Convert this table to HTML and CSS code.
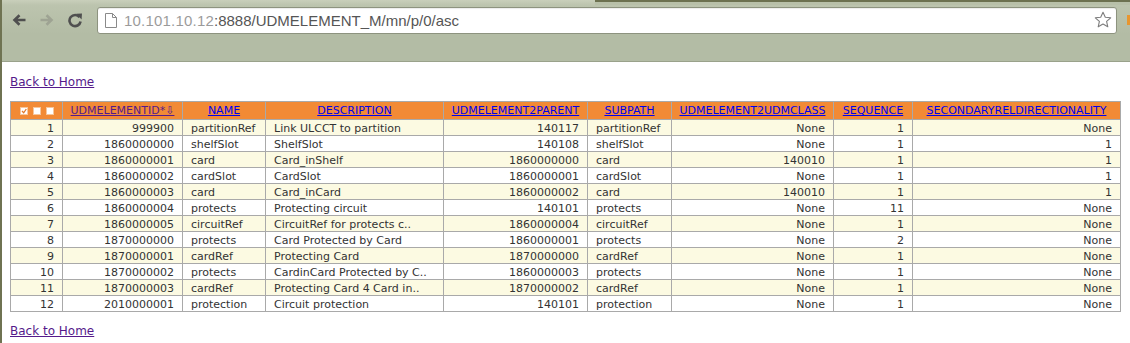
FILE: index.html
```html
<!DOCTYPE html>
<html>
<head>
<meta charset="utf-8">
<title>UDMELEMENT_M</title>
<link rel="stylesheet" href="styles.css">
</head>
<body>
<div class="window">
  <div class="chrome">
    <div class="tabstrip"><div class="tab-active"></div><div class="tab-rest"></div></div>
    <div class="toolbar">
      <div class="navbtn">
        <svg width="16" height="16" viewBox="0 0 16 16"><path d="M14.5 8H4M8.5 3.2L3.5 8l5 4.8" fill="none" stroke="#4f4f4f" stroke-width="2.6" stroke-linecap="butt" stroke-linejoin="miter"/></svg>
      </div>
      <div class="navbtn">
        <svg width="16" height="16" viewBox="0 0 16 16"><path d="M1.5 8H12M7.5 3.2l5 4.8-5 4.8" fill="none" stroke="#9ea393" stroke-width="2.6" stroke-linejoin="miter"/></svg>
      </div>
      <div class="navbtn">
        <svg width="16" height="16" viewBox="0 0 16 16"><path d="M12.6 5.2A5.6 5.6 0 1 0 13.6 9.6" fill="none" stroke="#4f4f4f" stroke-width="2.6"/><path d="M9.2 1.8L15 1.6 14.6 7.4Z" fill="#4f4f4f"/></svg>
      </div>
      <div class="omnibox">
        <svg class="pageicon" width="12" height="15" viewBox="0 0 12 15"><path d="M0.5 0.5H7.5L11.5 4.5V14.5H0.5Z" fill="#fff" stroke="#8a8a8a"/><path d="M7.5 0.5V4.5H11.5" fill="none" stroke="#8a8a8a"/></svg>
        <span class="url"><span class="host">10.101.10.12</span>:8888/UDMELEMENT_M/mn/p/0/asc</span>
        <svg class="star" width="18" height="18" viewBox="0 0 18 18"><path d="M9 1.2l2.3 5.1 5.4.5-4.1 3.6 1.2 5.4L9 13l-4.8 2.8 1.2-5.4L1.3 6.8l5.4-.5Z" fill="#fff" stroke="#7d7d7d" stroke-width="1.1" stroke-linejoin="round"/></svg>
      </div>
      <div class="ext"></div>
    </div>
    <div class="bookmarks"></div>
  </div>
  <div class="page">
    <p class="back"><a href="#home" class="visited">Back to Home</a></p>
    <table class="grid">
      <colgroup>
        <col class="c1"><col class="c2"><col class="c3"><col class="c4"><col class="c5"><col class="c6"><col class="c7"><col class="c8"><col class="c9">
      </colgroup>
      <thead>
        <tr>
          <th class="sel"><svg width="34" height="8" viewBox="0 0 34 8"><rect x="0.5" y="0.5" width="7" height="7" fill="#fff" stroke="#f6c69c"/><path d="M2 4l1.7 1.8L6.3 2" fill="none" stroke="#e27a2a" stroke-width="1.3"/><rect x="13.5" y="0.5" width="7" height="7" fill="#fff" stroke="#f6c69c"/><rect x="26.5" y="0.5" width="7" height="7" fill="#fff" stroke="#f6c69c"/></svg></th>
          <th><a href="#id" class="visited">UDMELEMENTID*⇩</a></th>
          <th><a href="#name">NAME</a></th>
          <th><a href="#desc">DESCRIPTION</a></th>
          <th><a href="#parent">UDMELEMENT2PARENT</a></th>
          <th><a href="#subpath">SUBPATH</a></th>
          <th><a href="#class">UDMELEMENT2UDMCLASS</a></th>
          <th><a href="#seq">SEQUENCE</a></th>
          <th><a href="#sec">SECONDARYRELDIRECTIONALITY</a></th>
        </tr>
      </thead>
      <tbody>
        <tr><td class="r">1</td><td class="r">999900</td><td>partitionRef</td><td>Link ULCCT to partition</td><td class="r">140117</td><td>partitionRef</td><td class="r">None</td><td class="r">1</td><td class="r">None</td></tr>
        <tr><td class="r">2</td><td class="r">1860000000</td><td>shelfSlot</td><td>ShelfSlot</td><td class="r">140108</td><td>shelfSlot</td><td class="r">None</td><td class="r">1</td><td class="r">1</td></tr>
        <tr><td class="r">3</td><td class="r">1860000001</td><td>card</td><td>Card_inShelf</td><td class="r">1860000000</td><td>card</td><td class="r">140010</td><td class="r">1</td><td class="r">1</td></tr>
        <tr><td class="r">4</td><td class="r">1860000002</td><td>cardSlot</td><td>CardSlot</td><td class="r">1860000001</td><td>cardSlot</td><td class="r">None</td><td class="r">1</td><td class="r">1</td></tr>
        <tr><td class="r">5</td><td class="r">1860000003</td><td>card</td><td>Card_inCard</td><td class="r">1860000002</td><td>card</td><td class="r">140010</td><td class="r">1</td><td class="r">1</td></tr>
        <tr><td class="r">6</td><td class="r">1860000004</td><td>protects</td><td>Protecting circuit</td><td class="r">140101</td><td>protects</td><td class="r">None</td><td class="r">11</td><td class="r">None</td></tr>
        <tr><td class="r">7</td><td class="r">1860000005</td><td>circuitRef</td><td>CircuitRef for protects c..</td><td class="r">1860000004</td><td>circuitRef</td><td class="r">None</td><td class="r">1</td><td class="r">None</td></tr>
        <tr><td class="r">8</td><td class="r">1870000000</td><td>protects</td><td>Card Protected by Card</td><td class="r">1860000001</td><td>protects</td><td class="r">None</td><td class="r">2</td><td class="r">None</td></tr>
        <tr><td class="r">9</td><td class="r">1870000001</td><td>cardRef</td><td>Protecting Card</td><td class="r">1870000000</td><td>cardRef</td><td class="r">None</td><td class="r">1</td><td class="r">None</td></tr>
        <tr><td class="r">10</td><td class="r">1870000002</td><td>protects</td><td>CardinCard Protected by C..</td><td class="r">1860000003</td><td>protects</td><td class="r">None</td><td class="r">1</td><td class="r">None</td></tr>
        <tr><td class="r">11</td><td class="r">1870000003</td><td>cardRef</td><td>Protecting Card 4 Card in..</td><td class="r">1870000002</td><td>cardRef</td><td class="r">None</td><td class="r">1</td><td class="r">None</td></tr>
        <tr><td class="r">12</td><td class="r">2010000001</td><td>protection</td><td>Circuit protection</td><td class="r">140101</td><td>protection</td><td class="r">None</td><td class="r">1</td><td class="r">None</td></tr>
      </tbody>
    </table>
    <p class="back"><a href="#home" class="visited">Back to Home</a></p>
  </div>
</div>
</body>
</html>
```
FILE: styles.css
```css
html, body {
  margin: 0;
  padding: 0;
  background: #ffffff;
  overflow: hidden;
}

.window {
  width: 1128px;
  height: 343px;
  border-left: 2px solid #6f7352;
  background: #ffffff;
}

.chrome {
  height: 62px;
  display: flex;
  flex-direction: column;
  background: #b3bca5;
}

.tabstrip {
  height: 5px;
  display: flex;
}

.tab-active {
  width: 593px;
  background: linear-gradient(#c9cfbb, #bcc4ae);
}

.tab-rest {
  flex: 1;
  border-top: 2px solid #6c7150;
  background: #b8c0a9;
}

.toolbar {
  height: 29px;
  display: flex;
  align-items: center;
  padding-left: 3px;
  background: linear-gradient(#bcc4ae, #b3bca5);
}

.navbtn {
  width: 28px;
  height: 27px;
  display: flex;
  align-items: center;
  justify-content: center;
}

.omnibox {
  margin-left: 8px;
  width: 1018px;
  height: 25px;
  margin-top: 1px;
  border: 1px solid #8d937f;
  border-radius: 3px;
  background: #ffffff;
  display: flex;
  align-items: center;
  box-shadow: inset 0 1px 1px rgba(0,0,0,0.08);
}

.pageicon {
  margin-left: 7px;
  margin-top: 1px;
}

.url {
  margin-left: 7px;
  font-family: "Liberation Sans", Arial, sans-serif;
  font-size: 15px;
  color: #555555;
  flex: 1;
  white-space: nowrap;
}

.host {
  color: #222;
  opacity: 0.45;
  letter-spacing: 0.2px;
}

.star {
  margin-right: 4px;
}

.ext {
  margin-left: 10px;
  width: 3px;
  height: 10px;
  background: #e8962f;
}

.bookmarks {
  flex: 1;
  border-bottom: 1px solid #9aa28b;
  background: #b3bca5;
}

.page {
  padding: 1px 8px;
  font-family: "DejaVu Sans", Verdana, sans-serif;
  font-size: 12px;
}

.back {
  margin: 12px 0;
  line-height: 14px;
}

a {
  color: #0000ee;
  text-decoration: underline;
}

a.visited {
  color: #551a8b;
}

.grid {
  border-collapse: collapse;
  table-layout: fixed;
  width: 1110px;
  font-family: "DejaVu Sans", Verdana, sans-serif;
  font-size: 11px;
  color: #333333;
}

.c1 { width: 52px; }
.c2 { width: 120px; }
.c3 { width: 83px; }
.c4 { width: 178px; }
.c5 { width: 144px; }
.c6 { width: 84px; }
.c7 { width: 162px; }
.c8 { width: 79px; }
.c9 { width: 208px; }

.grid th,
.grid td {
  border: 1px solid #a9a9a9;
  white-space: nowrap;
  overflow: hidden;
}

.grid th {
  background: #f28a35;
  font-weight: normal;
  text-align: center;
  line-height: 13px;
  height: 13px;
  padding: 2px 4px 2px 4px;
}

.grid th.sel {
  padding: 0;
}

.grid th.sel svg {
  display: block;
  margin: 0 auto;
}

.grid td {
  line-height: 13px;
  height: 13px;
  padding: 2px 8px 0 8px;
  text-align: left;
}

.grid td.r {
  text-align: right;
}

.grid tbody tr:nth-child(odd) td {
  background: #fcfae2;
}

.grid tbody tr:nth-child(even) td {
  background: #ffffff;
}
```
